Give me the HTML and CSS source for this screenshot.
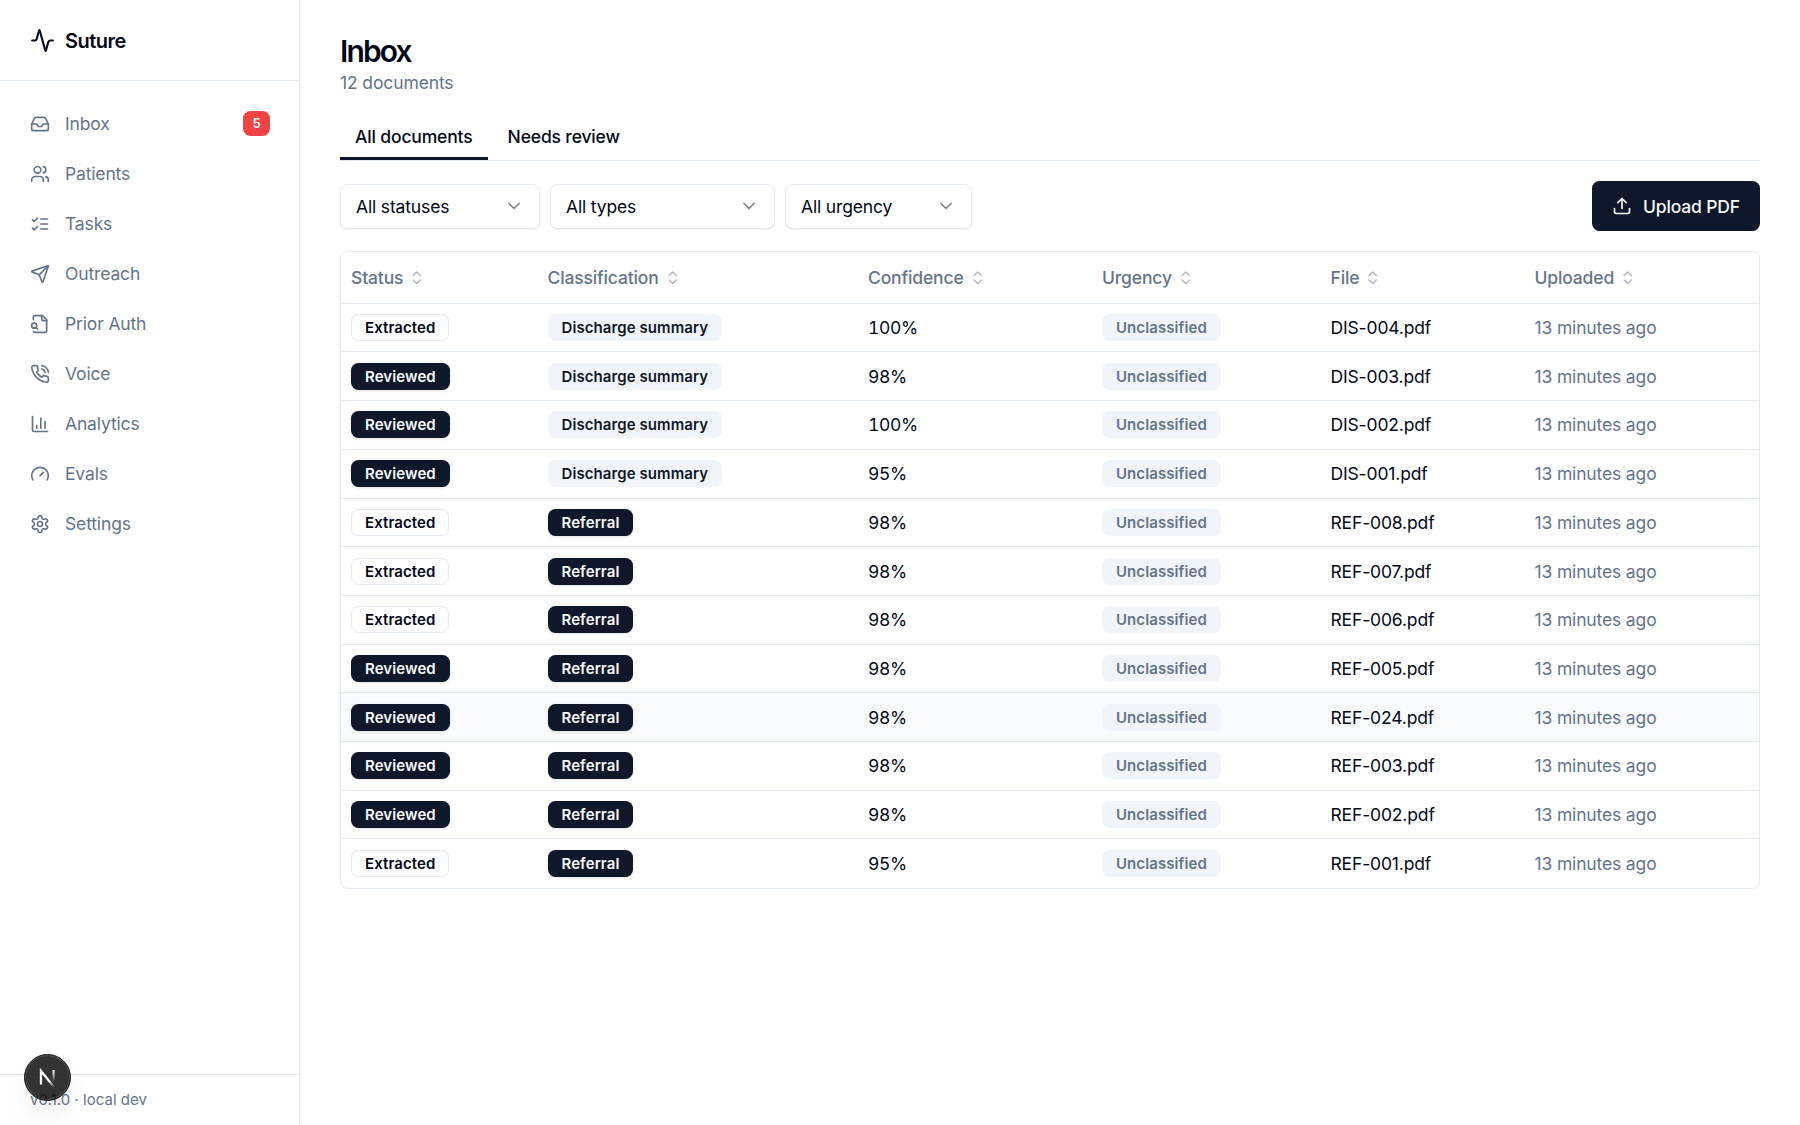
FILE: index.html
```
<!DOCTYPE html>
<html lang="en">
<head>
  <meta charset="utf-8">
  <title>Suture</title>
  <link rel="stylesheet" href="styles.css">
</head>
<body>

  <svg class="sprite">
    <symbol id="sort" viewBox="0 0 24 24"><path d="m7 15 5 5 5-5"/><path d="m7 9 5-5 5 5"/></symbol>
    <symbol id="chevron" viewBox="0 0 24 24"><path d="m6 9 6 6 6-6"/></symbol>
  </svg>

  <aside class="sidebar">
    <div class="brand">
      <svg class="icon" viewBox="0 0 24 24"><path d="M22 12h-2.48a2 2 0 0 0-1.93 1.46l-2.35 8.36a.25.25 0 0 1-.48 0L9.24 2.18a.25.25 0 0 0-.48 0l-2.35 8.36A2 2 0 0 1 4.49 12H2"/></svg>
      <span>Suture</span>
    </div>

    <nav class="nav">
      <a class="nav-item">
        <svg class="icon" viewBox="0 0 24 24"><polyline points="22 12 16 12 14 15 10 15 8 12 2 12"/><path d="M5.45 5.11 2 12v6a2 2 0 0 0 2 2h16a2 2 0 0 0 2-2v-6l-3.45-6.89A2 2 0 0 0 16.76 4H7.24a2 2 0 0 0-1.79 1.11z"/></svg>
        <span>Inbox</span>
        <span class="count">5</span>
      </a>
      <a class="nav-item">
        <svg class="icon" viewBox="0 0 24 24"><path d="M16 21v-2a4 4 0 0 0-4-4H6a4 4 0 0 0-4 4v2"/><circle cx="9" cy="7" r="4"/><path d="M22 21v-2a4 4 0 0 0-3-3.87"/><path d="M16 3.13a4 4 0 0 1 0 7.75"/></svg>
        <span>Patients</span>
      </a>
      <a class="nav-item">
        <svg class="icon" viewBox="0 0 24 24"><path d="m3 17 2 2 4-4"/><path d="m3 7 2 2 4-4"/><path d="M13 6h8"/><path d="M13 12h8"/><path d="M13 18h8"/></svg>
        <span>Tasks</span>
      </a>
      <a class="nav-item">
        <svg class="icon" viewBox="0 0 24 24"><path d="M14.536 21.686a.5.5 0 0 0 .937-.024l6.5-19a.496.496 0 0 0-.635-.635l-19 6.5a.5.5 0 0 0-.024.937l7.93 3.18a2 2 0 0 1 1.112 1.11z"/><path d="m21.854 2.147-10.94 10.939"/></svg>
        <span>Outreach</span>
      </a>
      <a class="nav-item">
        <svg class="icon" viewBox="0 0 24 24"><path d="M14 2v4a2 2 0 0 0 2 2h4"/><path d="M4.268 21a2 2 0 0 0 1.727 1H18a2 2 0 0 0 2-2V7l-5-5H6a2 2 0 0 0-2 2v3"/><path d="m9 18-1.5-1.5"/><circle cx="5" cy="14" r="3"/></svg>
        <span>Prior Auth</span>
      </a>
      <a class="nav-item">
        <svg class="icon" viewBox="0 0 24 24"><path d="M22 16.92v3a2 2 0 0 1-2.18 2 19.79 19.79 0 0 1-8.63-3.07 19.5 19.5 0 0 1-6-6 19.79 19.79 0 0 1-3.07-8.67A2 2 0 0 1 4.11 2h3a2 2 0 0 1 2 1.72 12.84 12.84 0 0 0 .7 2.81 2 2 0 0 1-.45 2.11L8.09 9.91a16 16 0 0 0 6 6l1.27-1.27a2 2 0 0 1 2.11-.45 12.84 12.84 0 0 0 2.81.7A2 2 0 0 1 22 16.92z"/><path d="M14.05 2a9 9 0 0 1 8 7.94"/><path d="M14.05 6A5 5 0 0 1 18 10"/></svg>
        <span>Voice</span>
      </a>
      <a class="nav-item">
        <svg class="icon" viewBox="0 0 24 24"><path d="M3 3v16a2 2 0 0 0 2 2h16"/><path d="M18 17V9"/><path d="M13 17V5"/><path d="M8 17v-3"/></svg>
        <span>Analytics</span>
      </a>
      <a class="nav-item">
        <svg class="icon" viewBox="0 0 24 24"><path d="m12 14 4-4"/><path d="M3.34 19a10 10 0 1 1 17.32 0"/></svg>
        <span>Evals</span>
      </a>
      <a class="nav-item">
        <svg class="icon" viewBox="0 0 24 24"><path d="M12.22 2h-.44a2 2 0 0 0-2 2v.18a2 2 0 0 1-1 1.73l-.43.25a2 2 0 0 1-2 0l-.15-.08a2 2 0 0 0-2.73.73l-.22.38a2 2 0 0 0 .73 2.73l.15.1a2 2 0 0 1 1 1.72v.51a2 2 0 0 1-1 1.74l-.15.09a2 2 0 0 0-.73 2.73l.22.38a2 2 0 0 0 2.73.73l.15-.08a2 2 0 0 1 2 0l.43.25a2 2 0 0 1 1 1.73V20a2 2 0 0 0 2 2h.44a2 2 0 0 0 2-2v-.18a2 2 0 0 1 1-1.73l.43-.25a2 2 0 0 1 2 0l.15.08a2 2 0 0 0 2.73-.73l.22-.39a2 2 0 0 0-.73-2.73l-.15-.08a2 2 0 0 1-1-1.74v-.5a2 2 0 0 1 1-1.74l.15-.09a2 2 0 0 0 .73-2.73l-.22-.38a2 2 0 0 0-2.73-.73l-.15.08a2 2 0 0 1-2 0l-.43-.25a2 2 0 0 1-1-1.73V4a2 2 0 0 0-2-2z"/><circle cx="12" cy="12" r="3"/></svg>
        <span>Settings</span>
      </a>
    </nav>

    <div class="sidebar-footer">v0.1.0 · local dev</div>
  </aside>

  <main class="main">
    <h1>Inbox</h1>
    <p class="subtitle">12 documents</p>

    <div class="tabs">
      <div class="tab active">All documents</div>
      <div class="tab">Needs review</div>
    </div>

    <div class="toolbar">
      <div class="select status-select"><span>All statuses</span><svg class="icon"><use href="#chevron"/></svg></div>
      <div class="select type-select"><span>All types</span><svg class="icon"><use href="#chevron"/></svg></div>
      <div class="select urgency-select"><span>All urgency</span><svg class="icon"><use href="#chevron"/></svg></div>
      <button class="upload-btn">
        <svg class="icon" viewBox="0 0 24 24"><path d="M21 15v4a2 2 0 0 1-2 2H5a2 2 0 0 1-2-2v-4"/><polyline points="17 8 12 3 7 8"/><line x1="12" x2="12" y1="3" y2="15"/></svg>
        <span>Upload PDF</span>
      </button>
    </div>

    <div class="table" id="documents">
      <div class="row head">
        <div class="cell">Status <svg class="icon"><use href="#sort"/></svg></div>
        <div class="cell">Classification <svg class="icon"><use href="#sort"/></svg></div>
        <div class="cell">Confidence <svg class="icon"><use href="#sort"/></svg></div>
        <div class="cell">Urgency <svg class="icon"><use href="#sort"/></svg></div>
        <div class="cell">File <svg class="icon"><use href="#sort"/></svg></div>
        <div class="cell">Uploaded <svg class="icon"><use href="#sort"/></svg></div>
      </div>
    </div>
  </main>

  <div class="dev-badge">
    <svg viewBox="0 0 40 40">
      <defs>
        <linearGradient id="fadeStem" x1="0" y1="13" x2="0" y2="24" gradientUnits="userSpaceOnUse">
          <stop offset="0" stop-color="#fff"/><stop offset="1" stop-color="#fff" stop-opacity="0"/>
        </linearGradient>
        <linearGradient id="fadeDiagonal" x1="22" y1="22" x2="27" y2="28" gradientUnits="userSpaceOnUse">
          <stop offset="0" stop-color="#fff"/><stop offset="1" stop-color="#fff" stop-opacity="0"/>
        </linearGradient>
      </defs>
      <path d="M14.2 26.2V14.2L25.8 28.4" stroke="url(#fadeDiagonal)"/>
      <path d="M25.4 13.4V24" stroke="url(#fadeStem)"/>
    </svg>
  </div>

  <script>
    const documents = [
      ['Extracted', 'Discharge summary', '100%', 'DIS-004.pdf'],
      ['Reviewed', 'Discharge summary', '98%', 'DIS-003.pdf'],
      ['Reviewed', 'Discharge summary', '100%', 'DIS-002.pdf'],
      ['Reviewed', 'Discharge summary', '95%', 'DIS-001.pdf'],
      ['Extracted', 'Referral', '98%', 'REF-008.pdf'],
      ['Extracted', 'Referral', '98%', 'REF-007.pdf'],
      ['Extracted', 'Referral', '98%', 'REF-006.pdf'],
      ['Reviewed', 'Referral', '98%', 'REF-005.pdf'],
      ['Reviewed', 'Referral', '98%', 'REF-024.pdf'],
      ['Reviewed', 'Referral', '98%', 'REF-003.pdf'],
      ['Reviewed', 'Referral', '98%', 'REF-002.pdf'],
      ['Extracted', 'Referral', '95%', 'REF-001.pdf']
    ];

    const table = document.getElementById('documents');

    documents.forEach(([status, type, confidence, file]) => {
      const row = document.createElement('div');
      row.className = file === 'REF-024.pdf' ? 'row hovered' : 'row';
      row.innerHTML = `
        <div class="cell"><span class="badge ${status === 'Reviewed' ? 'solid' : 'outline'}">${status}</span></div>
        <div class="cell"><span class="badge ${type === 'Referral' ? 'solid' : 'soft'}">${type}</span></div>
        <div class="cell confidence">${confidence}</div>
        <div class="cell"><span class="badge soft muted">Unclassified</span></div>
        <div class="cell">${file}</div>
        <div class="cell uploaded">13 minutes ago</div>`;
      table.appendChild(row);
    });
  </script>
</body>
</html>
```
FILE: styles.css
```
* {
  box-sizing: border-box;
}

body {
  margin: 0;
  display: flex;
  height: 1125px;
  overflow: hidden;
  font-family: Inter, sans-serif;
  font-size: 17.5px;
  line-height: 25px;
  letter-spacing: -0.15px;
  color: #020817;
  background: #fff;
}

.sprite {
  display: none;
}

.icon {
  width: 20px;
  height: 20px;
  flex-shrink: 0;
  fill: none;
  stroke: currentColor;
  stroke-width: 2;
  stroke-linecap: round;
  stroke-linejoin: round;
}

/* sidebar */
.sidebar {
  width: 300px;
  flex-shrink: 0;
  display: flex;
  flex-direction: column;
  border-right: 1px solid #e2e8f0;
}

.brand {
  display: flex;
  align-items: center;
  gap: 10px;
  height: 81px;
  padding: 0 30px;
  border-bottom: 1px solid #e2e8f0;
  font-size: 20px;
  font-weight: 600;
  letter-spacing: -0.5px;
}

.brand span {
  padding-top: 2px;
}

.brand .icon {
  width: 25px;
  height: 25px;
}

.nav {
  flex: 1;
  display: flex;
  flex-direction: column;
  gap: 5px;
  padding: 20.25px 14px 20.25px 15px;
}

.nav-item {
  display: flex;
  align-items: center;
  gap: 15px;
  height: 45px;
  padding: 0 15px;
  color: #64748b;
}

.count {
  margin-left: auto;
  width: 27px;
  height: 25px;
  border-radius: 7.5px;
  background: #ef4444;
  color: #f8fafc;
  font-size: 13px;
  font-weight: 600;
  text-align: center;
}

.sidebar-footer {
  height: 51px;
  padding: 15px 30px;
  border-top: 1px solid #e2e8f0;
  color: #64748b;
  font-size: 15px;
  line-height: 20px;
  letter-spacing: 0.03px;
}

/* main */
.main {
  flex: 1;
  padding: 31px 40px;
}

h1 {
  margin: 0;
  font-size: 30px;
  font-weight: 600;
  line-height: 40px;
  letter-spacing: -1.85px;
}

.subtitle {
  margin: -1px 0 0;
  color: #64748b;
  letter-spacing: -0.12px;
}

.tabs {
  display: flex;
  gap: 5px;
  height: 46px;
  margin-top: 20px;
  border-bottom: 1px solid #e2e8f0;
}

.tab {
  height: 45px;
  padding: 9px 15px 0;
  border-bottom: 3px solid transparent;
  font-weight: 500;
  letter-spacing: -0.15px;
}

.tab.active {
  border-bottom-color: #0f172a;
}

.toolbar {
  display: flex;
  align-items: center;
  gap: 10px;
  height: 50px;
  margin: 20px 0;
}

.select {
  display: flex;
  align-items: center;
  justify-content: space-between;
  height: 45px;
  padding: 0 15px;
  border: 1px solid #e2e8f0;
  border-radius: 7.5px;
  box-shadow: 0 1px 2px rgba(0, 0, 0, 0.06);
}

.select .icon {
  opacity: 0.5;
}

.status-select {
  width: 200px;
}

.type-select {
  width: 225px;
}

.urgency-select {
  width: 187px;
}

.upload-btn {
  display: flex;
  align-items: center;
  gap: 11px;
  width: 168px;
  height: 50px;
  margin-left: auto;
  padding: 0 20px;
  border: none;
  border-radius: 7.5px;
  background: #0f172a;
  color: #f8fafc;
  font: inherit;
  font-weight: 500;
  letter-spacing: -0.15px;
  white-space: nowrap;
}

/* documents table */
.table {
  border: 1px solid #e2e8f0;
  border-radius: 7.5px;
  overflow: hidden;
}

.row {
  display: grid;
  grid-template-columns: 196.5px 320.5px 234px 228.5px 204px 1fr;
  height: 48.7px;
  border-bottom: 1px solid #e2e8f0;
}

.row:last-child {
  border-bottom: none;
}

.row.hovered {
  background: #f8fafc;
}

.cell {
  display: flex;
  align-items: center;
  padding: 0 10px;
}

.row.head {
  height: 51.75px;
  color: #64748b;
  font-weight: 500;
}

.head .icon {
  width: 17.5px;
  height: 17.5px;
  margin-left: 5px;
  opacity: 0.5;
}

.confidence {
  font-variant-numeric: tabular-nums;
  letter-spacing: -0.35px;
}

.uploaded {
  color: #64748b;
}

.badge {
  padding: 3px 13px;
  height: 27px;
  border: 1px solid transparent;
  border-radius: 7.5px;
  font-size: 15px;
  font-weight: 600;
  line-height: 19px;
  letter-spacing: 0.08px;
}

.badge.outline {
  border-color: #e2e8f0;
}

.badge.solid {
  background: #0f172a;
  color: #f8fafc;
  box-shadow: 0 1px 3px rgba(0, 0, 0, 0.12);
}

.badge.soft {
  background: #f1f5f9;
  color: #0f172a;
}

.badge.muted {
  color: #64748b;
}

/* floating dev tools button */
.dev-badge {
  position: absolute;
  left: 24px;
  bottom: 24px;
  width: 47px;
  height: 47px;
  border-radius: 50%;
  background: rgba(0, 0, 0, 0.8);
  border: 1px solid #171717;
  box-shadow: inset 0 0 0 1px rgba(255, 255, 255, 0.15), 0 16px 32px -8px rgba(0, 0, 0, 0.14);
}

.dev-badge svg {
  display: block;
  width: 45px;
  height: 45px;
  fill: none;
  stroke-width: 2;
}
```
